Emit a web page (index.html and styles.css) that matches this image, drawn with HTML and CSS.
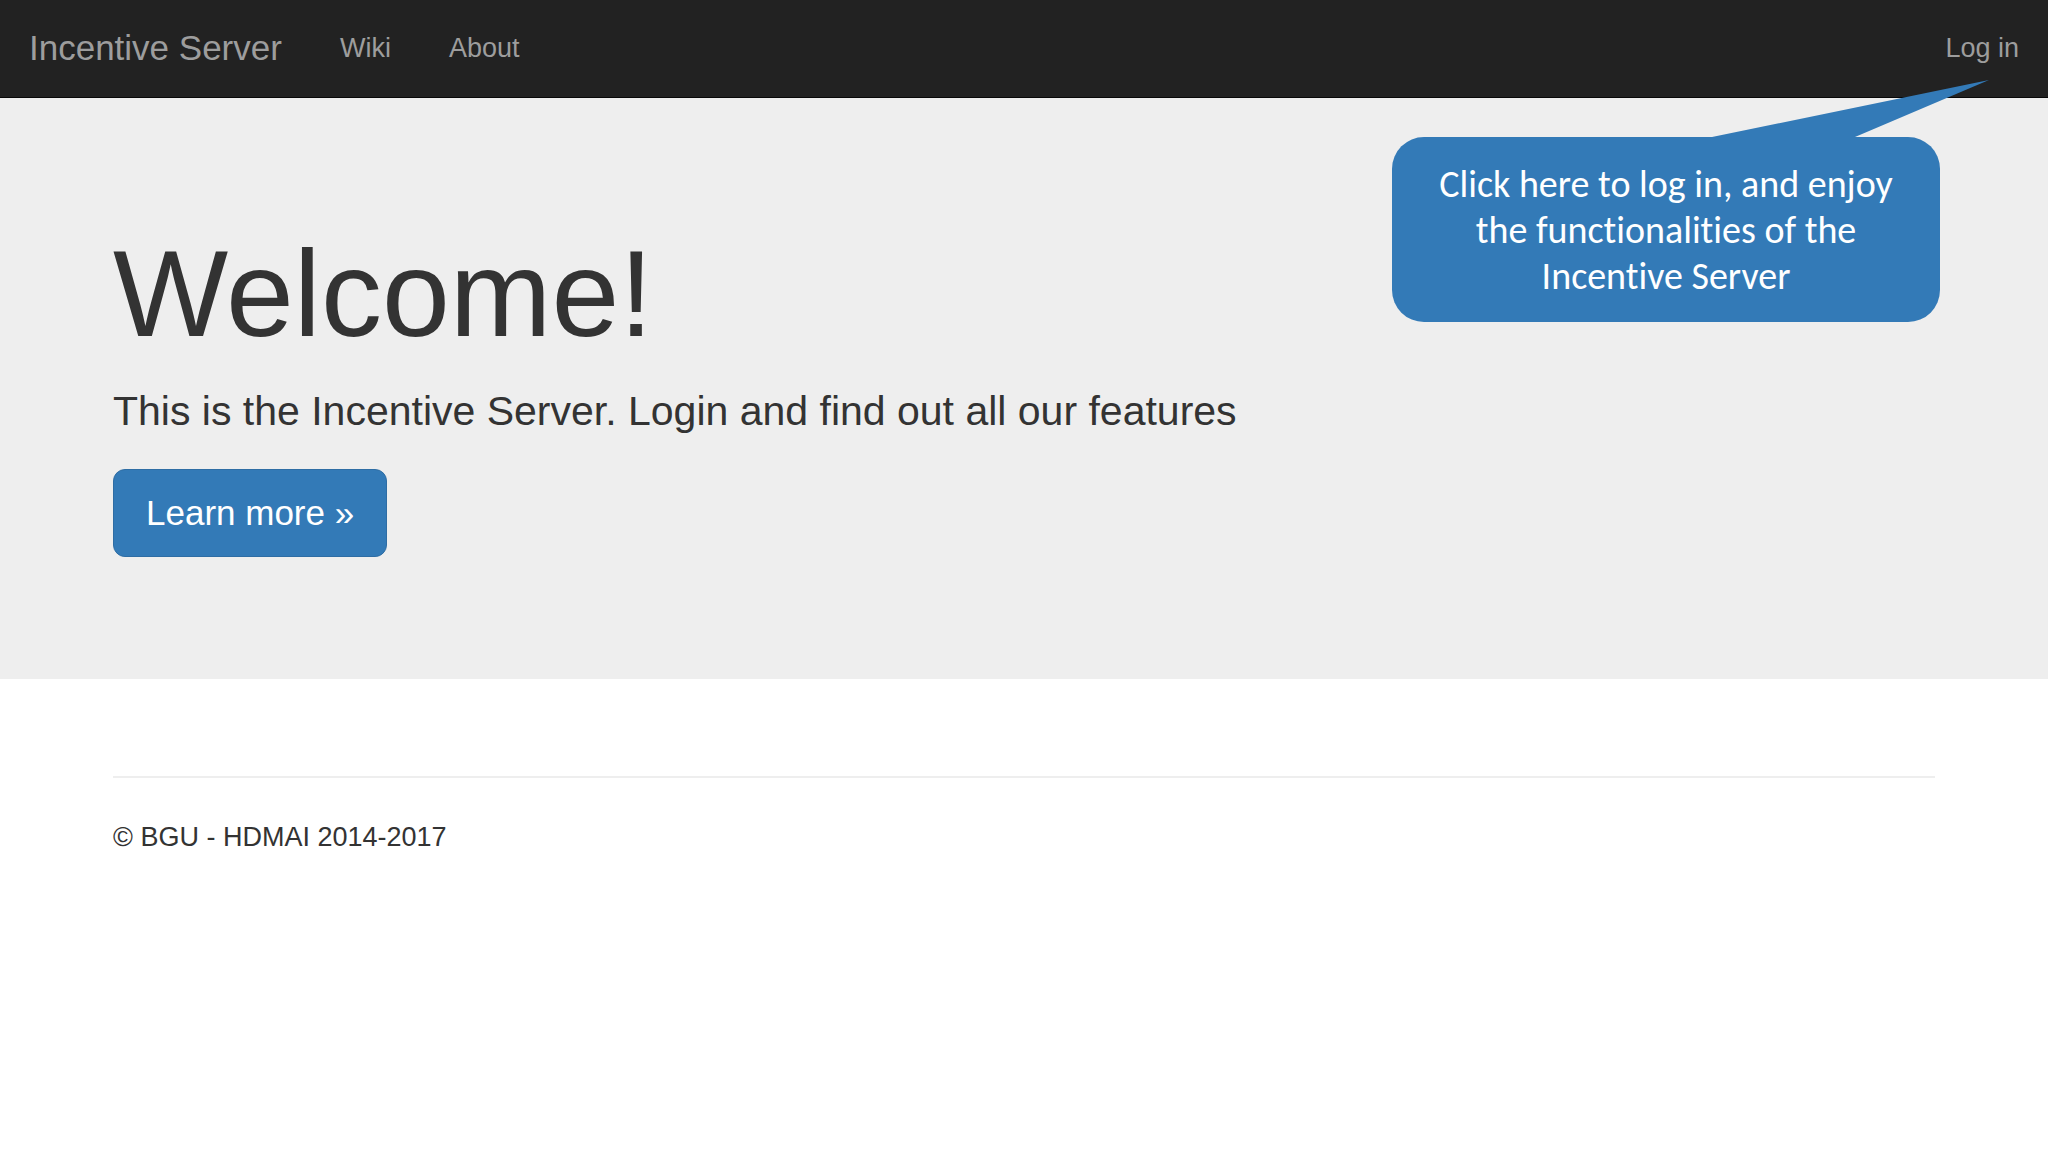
FILE: index.html
```html
<!DOCTYPE html>
<html lang="en">
<head>
  <meta charset="UTF-8">
  <meta name="viewport" content="width=device-width, initial-scale=1">
  <title>Incentive Server</title>
  <link rel="stylesheet" href="styles.css">
</head>
<body>
  <!-- NAVBAR -->
  <nav class="navbar">
    <a class="navbar-brand" href="#">Incentive Server</a>
    <ul class="navbar-nav">
      <li><a href="#">Wiki</a></li>
      <li><a href="#">About</a></li>
    </ul>
    <a class="login-link" href="#" aria-describedby="loginHint">Log in</a>

    <!-- Login hint, hangs below the navbar -->
    <div class="callout" id="loginHint" role="tooltip">
      <svg class="callout-tail" viewBox="0 0 277 58" aria-hidden="true">
        <path d="M0 57 L277 0 L143 57 V58 H0 Z" />
      </svg>
      Click here to log in, and enjoy the functionalities of the Incentive Server
    </div>
  </nav>

  <main class="jumbotron">
    <h1>Welcome!</h1>
    <p>This is the Incentive Server. Login and find out all our features</p>
    <a class="btn" href="#">Learn more »</a>
  </main>

  <footer>
    <hr>
    <p>© BGU - HDMAI 2014-2017</p>
  </footer>
</body>
</html>
```

FILE: styles.css
```css
* {
  margin: 0;
  padding: 0;
  box-sizing: border-box;
}

body {
  font-family: "Liberation Sans", Arial, sans-serif;
  font-size: 27px;
  line-height: 40px;
  color: #333;
  background-color: #fff;
}

.navbar {
  position: relative;
  display: flex;
  align-items: center;
  padding: 28px 29px 29px;
  background-color: #222;
  border-bottom: 1px solid #080808;
}

.navbar a {
  color: #9d9d9d;
  text-decoration: none;
}

.navbar a:hover {
  color: #fff;
}

.navbar-brand {
  font-size: 35px;
}

.navbar-nav {
  display: flex;
  gap: 58px;
  margin-left: 58px;
  list-style: none;
}

.login-link {
  margin-left: auto;
}

.callout {
  position: absolute;
  top: 137px;
  right: 108px;
  width: 548px;
  padding: 24px 40px 23px;
  border-radius: 32px;
  background-color: #337ab7;
  color: #fff;
  font-family: Carlito, Calibri, Lato, sans-serif;
  font-size: 38px;
  font-variant-ligatures: none;
  line-height: 46px;
  text-align: center;
}

.callout-tail {
  position: absolute;
  right: -49px;
  bottom: calc(100% - 1px);
  width: 277px;
  height: 58px;
  fill: #337ab7;
}

.jumbotron {
  padding: 132px 113px 122px;
  background-color: #eee;
}

.jumbotron h1 {
  margin-bottom: 27px;
  font-size: 122px;
  font-weight: 500;
  line-height: 128px;
}

.jumbotron p {
  margin-bottom: 32px;
  font-size: 41px;
  line-height: 52px;
}

.btn {
  display: inline-block;
  padding: 18px 32px;
  border: 1px solid #2e6da4;
  border-radius: 12px;
  background-color: #337ab7;
  color: #fff;
  font-size: 35px;
  line-height: 50px;
  text-decoration: none;
}

.btn:hover {
  background-color: #286090;
}

footer {
  padding: 97px 113px;
}

footer hr {
  margin-bottom: 39px;
  border: 0;
  border-top: 2px solid #eee;
}
```
